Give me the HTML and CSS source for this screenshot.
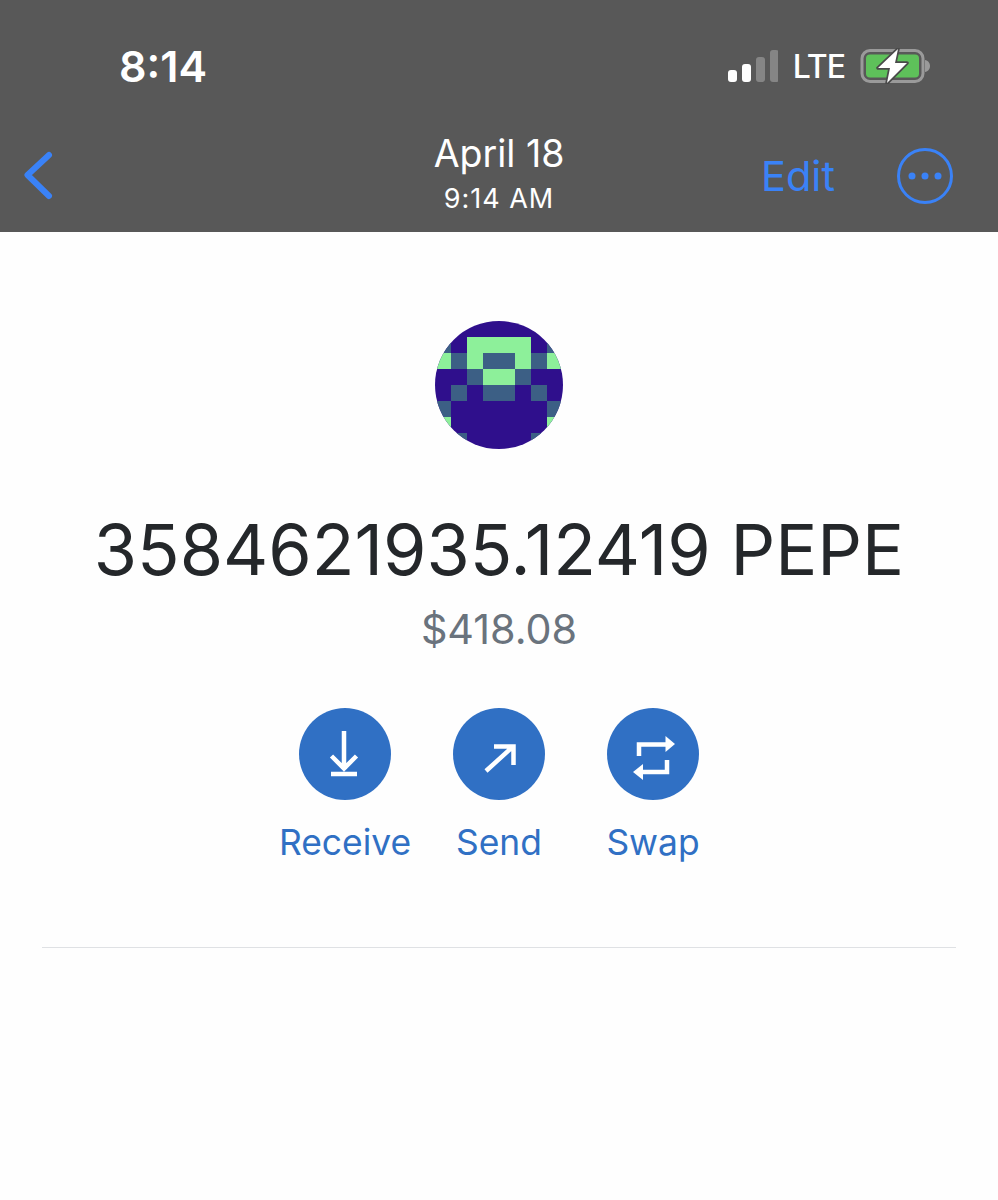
FILE: index.html
```html
<!DOCTYPE html>
<html lang="en">
<head>
    <meta charset="UTF-8">
    <meta name="viewport" content="width=device-width, initial-scale=1.0">
    <title>April 18</title>
    <link rel="stylesheet" href="styles.css">
</head>
<body>
    <header class="top">
        <div class="status">
            <span class="clock">8:14</span>
            <div class="status-right">
                <svg class="signal" width="50" height="32" viewBox="0 0 50 32">
                    <rect x="0" y="20" width="9" height="12" rx="3" fill="#fff"/>
                    <rect x="14" y="14" width="9" height="18" rx="3" fill="#fff"/>
                    <rect x="28" y="7" width="9" height="25" rx="3" fill="#858585"/>
                    <rect x="42" y="0" width="9" height="32" rx="3" fill="#858585"/>
                </svg>
                <span class="net">LTE</span>
                <svg class="battery" width="72" height="36" viewBox="0 0 72 36">
                    <rect x="2" y="2.500" width="61" height="31" rx="8" fill="none" stroke="#9a9a9a" stroke-width="3"/>
                    <rect x="6" y="6.500" width="53" height="23" rx="4" fill="#5ec15a"/>
                    <path d="M65 12c3 .5 5 3 5 6s-2 5.500-5 6z" fill="#9a9a9a"/>
                    <path d="M38 1 18 20h12l-3 15 20-20H35z" fill="#fff" stroke="#4a4a4a" stroke-width="3.500" paint-order="stroke" stroke-linejoin="round"/>
                </svg>
            </div>
        </div>
        <nav class="nav">
            <svg class="back" width="34" height="54" viewBox="0 0 34 54">
                <path d="M27 6 5.500 26 27 47" fill="none" stroke="#3a82f7" stroke-width="6" stroke-linecap="round" stroke-linejoin="round"/>
            </svg>
            <div class="title">
                <div class="date">April 18</div>
                <div class="time">9:14 AM</div>
            </div>
            <div class="actions">
                <span class="edit">Edit</span>
                <svg width="56" height="56" viewBox="0 0 56 56">
                    <circle cx="28" cy="28" r="26.500" fill="none" stroke="#3a82f7" stroke-width="3"/>
                    <circle cx="15" cy="28" r="3.500" fill="#3a82f7"/>
                    <circle cx="28" cy="28" r="3.500" fill="#3a82f7"/>
                    <circle cx="41" cy="28" r="3.500" fill="#3a82f7"/>
                </svg>
            </div>
        </nav>
    </header>

    <main class="detail">
        <svg class="avatar" width="128" height="128" viewBox="0 0 8 8" shape-rendering="crispEdges">
            <rect width="8" height="8" fill="#2f0f8c"/>
            <g fill="#8df09a">
                <rect x="2" y="1" width="4" height="1"/>
                <rect x="0" y="2" width="1" height="1"/>
                <rect x="2" y="2" width="1" height="1"/>
                <rect x="5" y="2" width="1" height="1"/>
                <rect x="7" y="2" width="1" height="1"/>
                <rect x="3" y="3" width="2" height="1"/>
                <rect x="0" y="6" width="1" height="1"/>
                <rect x="7" y="6" width="1" height="1"/>
            </g>
            <g fill="#3c5f85">
                <rect x="0" y="1" width="1" height="1"/>
                <rect x="7" y="1" width="1" height="1"/>
                <rect x="1" y="2" width="1" height="1"/>
                <rect x="3" y="2" width="2" height="1"/>
                <rect x="6" y="2" width="1" height="1"/>
                <rect x="2" y="3" width="1" height="1"/>
                <rect x="5" y="3" width="1" height="1"/>
                <rect x="1" y="4" width="1" height="1"/>
                <rect x="3" y="4" width="2" height="1"/>
                <rect x="6" y="4" width="1" height="1"/>
                <rect x="0" y="5" width="1" height="1"/>
                <rect x="7" y="5" width="1" height="1"/>
                <rect x="1" y="7" width="1" height="1"/>
                <rect x="6" y="7" width="1" height="1"/>
            </g>
        </svg>
        <div class="amount">3584621935.12419 PEPE</div>
        <div class="fiat">$418.08</div>
        <div class="buttons">
            <div class="btn">
                <div class="btn-circle">
                    <svg width="92" height="92" viewBox="0 0 92 92" fill="none" stroke="#fff" stroke-width="4.500">
                        <path d="M45 23v37M32.500 48 45 60.500 57.500 48M32 66h26"/>
                    </svg>
                </div>
                <span>Receive</span>
            </div>
            <div class="btn">
                <div class="btn-circle">
                    <svg width="92" height="92" viewBox="0 0 92 92" fill="none" stroke="#fff" stroke-width="4.500">
                        <path d="M33 63 60 38.500M41 38.500h19.500V57"/>
                    </svg>
                </div>
                <span>Send</span>
            </div>
            <div class="btn">
                <div class="btn-circle">
                    <svg width="92" height="92" viewBox="0 0 92 92" fill="none" stroke="#fff" stroke-width="4.500">
                        <path d="M32 48V36.500h28M60 52v12H35"/>
                        <path d="M58.500 28 68 36 58.500 44zM36 56 26 64 36 72z" fill="#fff" stroke="none"/>
                    </svg>
                </div>
                <span>Swap</span>
            </div>
        </div>
        <hr class="divider">
    </main>
</body>
</html>
```

FILE: styles.css
```css
body {
    margin: 0;
    background-color: #fefefe;
    font-family: 'Inter', sans-serif;
    color: #24272a;
}
.top {
    height: 232px;
    background-color: #585858;
    color: #fff;
    box-sizing: border-box;
}
.status {
    display: flex;
    justify-content: space-between;
    align-items: center;
    height: 132px;
    padding: 0 66px 0 119px;
    box-sizing: border-box;
}
.clock {
    font-size: 43px;
    font-weight: 600;
}
.status-right {
    display: flex;
    align-items: center;
    gap: 15px;
}
.net {
    font-size: 32px;
    font-weight: 500;
    letter-spacing: -1px;
}
.nav {
    display: grid;
    grid-template-columns: 1fr auto 1fr;
    align-items: center;
    padding: 0 45px;
    height: 100px;
    margin-top: -6px;
}
.back {
    margin-left: -23px;
}
.title {
    text-align: center;
    margin-bottom: 6px;
}
.date {
    font-size: 37.500px;
    margin-bottom: 6px;
}
.time {
    font-size: 27px;
    letter-spacing: 1px;
}
.actions {
    display: flex;
    justify-content: flex-end;
    align-items: center;
    gap: 62px;
    color: #3a82f7;
}
.edit {
    font-size: 41.500px;
}
.detail {
    display: flex;
    flex-direction: column;
    align-items: center;
    padding-top: 89px;
}
.avatar {
    border-radius: 50%;
}
.amount {
    margin-top: 59px;
    font-size: 70.100px;
    line-height: 84px;
    white-space: nowrap;
}
.fiat {
    margin-top: 9px;
    font-size: 41.300px;
    line-height: 56px;
    color: #6a737d;
}
.buttons {
    display: grid;
    grid-template-columns: repeat(3, 154px);
    margin-top: 51px;
}
.btn {
    display: flex;
    flex-direction: column;
    align-items: center;
    color: #3070c4;
    font-size: 35.400px;
}
.btn-circle {
    width: 92px;
    height: 92px;
    border-radius: 50%;
    background-color: #3070c4;
    margin-bottom: 21px;
}
.divider {
    width: 914px;
    margin: 83px 0 0;
    border: none;
    border-top: 1px solid #dfe1e4;
}
```
